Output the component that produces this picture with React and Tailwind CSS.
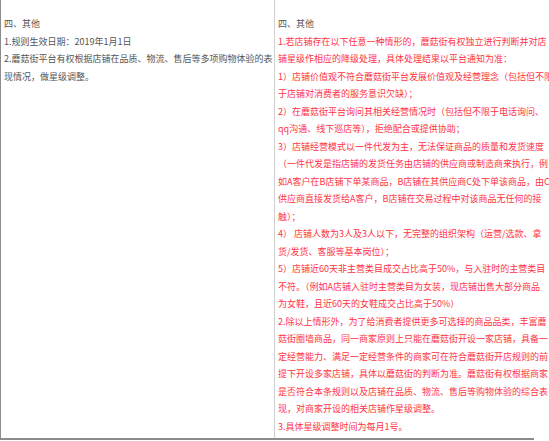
import React from "react";

const leftLines = [
  "四、其他",
  "1.规则生效日期：2019年1月1日",
  "2.蘑菇街平台有权根据店铺在品质、物流、售后等多项购物体验的表",
  "现情况，做星级调整。",
];

const rightLines = [
  "1.若店铺存在以下任意一种情形的，蘑菇街有权独立进行判断并对店",
  "铺星级作相应的降级处理，具体处理结果以平台通知为准：",
  "1）店铺价值观不符合蘑菇街平台发展价值观及经营理念（包括但不限",
  "于店铺对消费者的服务意识欠缺）；",
  "2）在蘑菇街平台询问其相关经营情况时（包括但不限于电话询问、",
  "qq沟通、线下巡店等），拒绝配合或提供协助；",
  "3）店铺经营模式以一件代发为主，无法保证商品的质量和发货速度",
  "（一件代发是指店铺的发货任务由店铺的供应商或制造商来执行，例",
  "如A客户在B店铺下单某商品，B店铺在其供应商C处下单该商品，由C",
  "供应商直接发货给A客户，B店铺在交易过程中对该商品无任何的接",
  "触）；",
  "4） 店铺人数为3人及3人以下，无完整的组织架构（运营/选款、拿",
  "货/发货、客服等基本岗位）；",
  "5）店铺近60天非主营类目成交占比高于50%，与入驻时的主营类目",
  "不符。（例如A店铺入驻时主营类目为女装，现店铺出售大部分商品",
  "为女鞋，且近60天的女鞋成交占比高于50%）",
  "2.除以上情形外，为了给消费者提供更多可选择的商品品类，丰富蘑",
  "菇街圈墙商品，同一商家原则上只能在蘑菇街开设一家店铺，具备一",
  "定经营能力、满足一定经营条件的商家可在符合蘑菇街开店规则的前",
  "提下开设多家店铺，具体以蘑菇街的判断为准。蘑菇街有权根据商家",
  "是否符合本条规则以及店铺在品质、物流、售后等购物体验的综合表",
  "现，对商家开设的相关店铺作星级调整。",
  "3.具体星级调整时间为每月1号。",
];

export default function App() {
  return (
    <div
      className="w-[549px] h-[441px] bg-white overflow-hidden"
      style={{ fontFamily: '"Noto Sans CJK SC", "Liberation Sans", sans-serif' }}
    >
      <div className="flex h-[440px] w-[534px] border-l border-b-2 border-[#8c8c8c]">
        <div className="w-[274px] shrink-0 border-r border-[#cfcfcf] pl-[3px] pt-[15px] text-[9px] leading-[17.5px] text-[#555555]">
          {leftLines.map((l, i) => (
            <div key={i} className="whitespace-nowrap">{l}</div>
          ))}
        </div>
        <div className="w-[259px] shrink-0 pl-[3px] pt-[15px] text-[9px] leading-[17.5px]">
          <div className="whitespace-nowrap text-[#555555]">四、其他</div>
          {rightLines.map((l, i) => (
            <div key={i} className="whitespace-nowrap text-[#ff3344]">{l}</div>
          ))}
        </div>
      </div>
    </div>
  );
}
